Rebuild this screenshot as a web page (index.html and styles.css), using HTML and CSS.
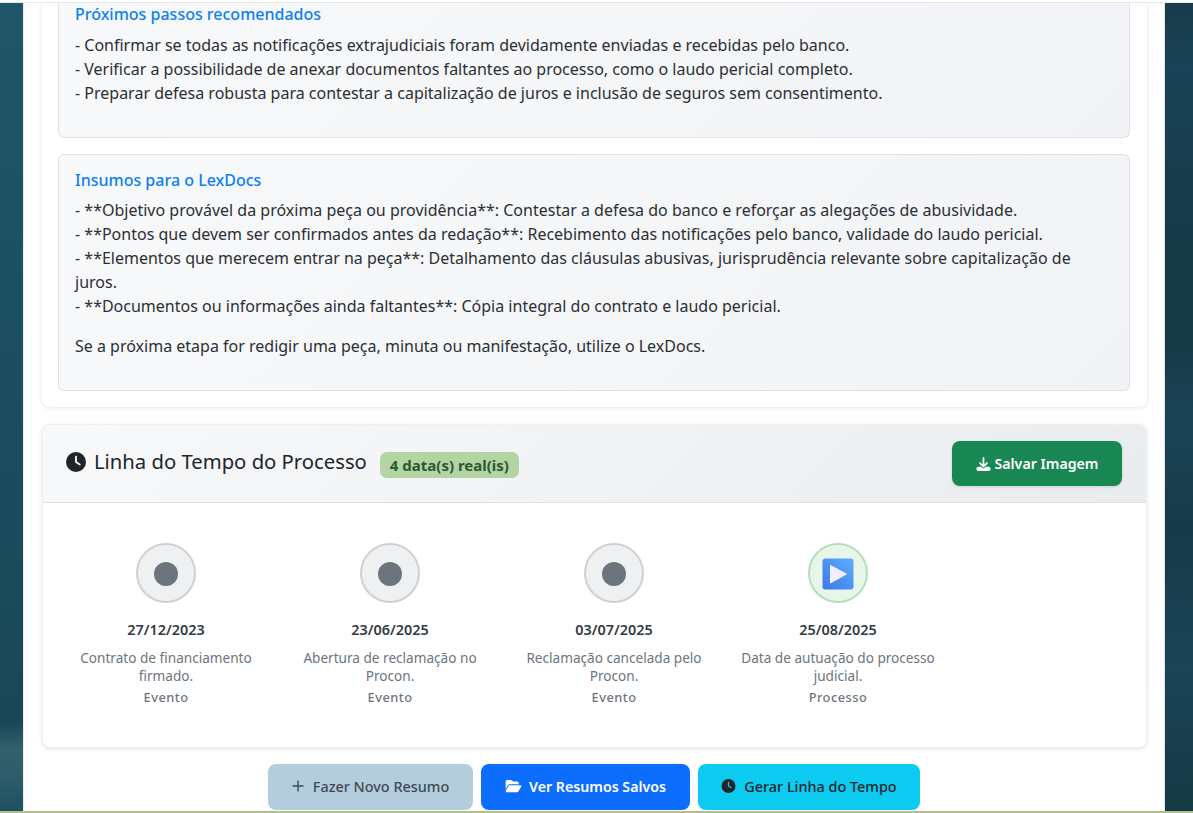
FILE: index.html
```html
<!DOCTYPE html>
<html lang="pt-BR">
<head>
<meta charset="utf-8">
<title>Resumo do Processo</title>
<link rel="stylesheet" href="styles.css">
</head>
<body>
<div class="top-strip"></div>
<main class="page">
  <section class="card summary">
    <div class="panel panel-first">
      <h3 class="panel-title">Próximos passos recomendados</h3>
      <p>- Confirmar se todas as notificações extrajudiciais foram devidamente enviadas e recebidas pelo banco.<br>
      - Verificar a possibilidade de anexar documentos faltantes ao processo, como o laudo pericial completo.<br>
      - Preparar defesa robusta para contestar a capitalização de juros e inclusão de seguros sem consentimento.</p>
    </div>
    <div class="panel panel-second">
      <h3 class="panel-title">Insumos para o LexDocs</h3>
      <p>- **Objetivo provável da próxima peça ou providência**: Contestar a defesa do banco e reforçar as alegações de abusividade.<br>
      - **Pontos que devem ser confirmados antes da redação**: Recebimento das notificações pelo banco, validade do laudo pericial.<br>
      - **Elementos que merecem entrar na peça**: Detalhamento das cláusulas abusivas, jurisprudência relevante sobre capitalização de juros.<br>
      - **Documentos ou informações ainda faltantes**: Cópia integral do contrato e laudo pericial.</p>
      <p>Se a próxima etapa for redigir uma peça, minuta ou manifestação, utilize o LexDocs.</p>
    </div>
  </section>

  <section class="card timeline">
    <header class="tl-header">
      <div class="tl-title">
        <svg class="ico-clock" viewBox="0 0 512 512"><path d="M256 0a256 256 0 1 1 0 512A256 256 0 1 1 256 0zM232 120V256c0 8 4 15.500 10.700 20l96 64c11 7.400 25.900 4.400 33.300-6.700s4.400-25.900-6.700-33.300L280 243.200V120c0-13.300-10.700-24-24-24s-24 10.700-24 24z"/></svg>
        <h2>Linha do Tempo do Processo</h2>
        <span class="badge">4 data(s) real(is)</span>
      </div>
      <button class="btn btn-save"><svg class="ico-sm" viewBox="0 0 512 512"><path d="M288 32c0-17.700-14.300-32-32-32s-32 14.300-32 32V274.700l-73.400-73.400c-12.500-12.500-32.800-12.500-45.300 0s-12.500 32.800 0 45.300l128 128c12.500 12.500 32.800 12.500 45.300 0l128-128c12.500-12.500 12.500-32.800 0-45.300s-32.800-12.500-45.300 0L288 274.700V32zM64 352c-35.300 0-64 28.700-64 64v32c0 35.300 28.700 64 64 64H448c35.300 0 64-28.700 64-64V416c0-35.300-28.700-64-64-64H346.500l-45.300 45.300c-25 25-65.500 25-90.500 0L165.500 352H64z"/></svg>Salvar Imagem</button>
    </header>
    <div class="tl-body">
      <article class="event">
        <div class="marker"><span class="dot"></span></div>
        <div class="date">27/12/2023</div>
        <p class="desc">Contrato de financiamento firmado.</p>
        <div class="kind">Evento</div>
      </article>
      <article class="event">
        <div class="marker"><span class="dot"></span></div>
        <div class="date">23/06/2025</div>
        <p class="desc">Abertura de reclamação no Procon.</p>
        <div class="kind">Evento</div>
      </article>
      <article class="event">
        <div class="marker"><span class="dot"></span></div>
        <div class="date">03/07/2025</div>
        <p class="desc">Reclamação cancelada pelo Procon.</p>
        <div class="kind">Evento</div>
      </article>
      <article class="event">
        <div class="marker marker-process">
          <svg class="play" viewBox="0 0 32 32">
            <defs>
              <linearGradient id="pg" x1="0" y1="1" x2="1" y2="0"><stop offset="0" stop-color="#3f78e8"/><stop offset="1" stop-color="#5aaeff"/></linearGradient>
            </defs>
            <rect x="0.500" y="0.500" width="31" height="31" rx="3" fill="url(#pg)"/>
            <path d="M8.500 7.500v17.500L24.500 16z" fill="#f5eefe" stroke="#f5eefe" stroke-linejoin="round"/>
          </svg>
        </div>
        <div class="date">25/08/2025</div>
        <p class="desc">Data de autuação do processo judicial.</p>
        <div class="kind">Processo</div>
      </article>
    </div>
  </section>

  <nav class="actions">
    <button class="btn btn-new"><svg class="ico-plus" viewBox="0 0 12 12"><path d="M6 .5v11M.5 6h11"/></svg>Fazer Novo Resumo</button>
    <button class="btn btn-saved"><svg class="ico-sm" viewBox="0 0 576 512"><path d="M88.700 223.800L0 375.800V96C0 60.700 28.700 32 64 32H181.500c17 0 33.300 6.700 45.300 18.700l26.500 26.500c12 12 28.300 18.700 45.300 18.700H416c35.300 0 64 28.700 64 64v32H144c-22.800 0-43.800 12.100-55.300 31.800zm27.600 16.100C122.100 230 132.600 224 144 224H544c11.500 0 22 6.100 27.700 16.100s5.700 22.200-.1 32.100l-112 192C453.900 474 443.400 480 432 480H32c-11.500 0-22-6.100-27.700-16.100s-5.700-22.200 .1-32.100l112-192z"/></svg>Ver Resumos Salvos</button>
    <button class="btn btn-gen"><svg class="ico-sm" viewBox="0 0 512 512"><path d="M256 0a256 256 0 1 1 0 512A256 256 0 1 1 256 0zM232 120V256c0 8 4 15.500 10.700 20l96 64c11 7.400 25.900 4.400 33.300-6.700s4.400-25.900-6.700-33.300L280 243.200V120c0-13.300-10.700-24-24-24s-24 10.700-24 24z"/></svg>Gerar Linha do Tempo</button>
  </nav>
</main>
<div class="bottom-strip"></div>
</body>
</html>
```

FILE: styles.css
```css
* { box-sizing: border-box; }

html, body { height: 100%; }

body {
  margin: 0;
  height: 813px;
  overflow: hidden;
  display: flex;
  flex-direction: column;
  font-family: "Noto Sans", sans-serif;
  font-size: 16px;
  line-height: 24px;
  color: #212529;
  background-color: #1a4a5a;
  background-image:
    linear-gradient(180deg, #205669 0%, #1d5063 30%, #1b4c5d 60%, #1a4757 89%, #33606d 92%, #2f5d6b 95%, #1f5060 100%),
    linear-gradient(180deg, #173c4a 0%, #1a4257 8%, #163a46 32%, #173a47 42%, #1b4458 52%, #173b48 65%, #1b4458 82%, #163a45 100%);
  background-size: 50% 100%, 50% 100%;
  background-position: left top, right top;
  background-repeat: no-repeat;
}

.top-strip {
  flex: none;
  height: 3px;
  background: #fff;
  border-bottom: 1px solid #e6e8eb;
}

.bottom-strip {
  flex: none;
  height: 2px;
  background: #b4c08a;
}

.page {
  flex: 1;
  min-height: 0;
  overflow: hidden;
  margin: 0 28px 0 23px;
  padding: 0 17.5px;
  background: #fff;
  border-left: 1px solid #e6eef3;
  border-right: 1px solid #e2e4e8;
}

.card {
  background: #fff;
  border-radius: 8px;
  box-shadow: 0 1px 4px rgba(0, 0, 0, 0.11);
}

.summary {
  padding: 0 16.5px 16px;
  border-radius: 0 0 8px 8px;
}

.panel {
  background: linear-gradient(135deg, #f8f9fa 0%, #f1f3f6 100%);
  border: 1px solid #dfe2e6;
  border-radius: 6px;
  padding: 13px 16px 16px;
}

.panel-first {
  height: 136px;
  margin-top: -1px;
  padding-top: 0;
  border-top: 0;
  border-radius: 0 0 6px 6px;
}

.panel-first .panel-title { margin-bottom: 7px; }

.panel-second {
  height: 237px;
  margin-top: 16px;
}

.panel-title {
  margin: 0 0 6px;
  font-size: 16px;
  line-height: 24px;
  font-weight: 500;
  color: #0d80f2;
}

.panel p { margin: 0 0 16px; color: #2b2f33; }

.timeline {
  height: 324px;
  margin-top: 17px;
  overflow: hidden;
  border: 1px solid #eef0f2;
}

.tl-header {
  height: 78px;
  display: flex;
  align-items: center;
  justify-content: space-between;
  padding: 0 23.500px 0 23.500px;
  background: linear-gradient(135deg, #f8f9fa 0%, #e9ecef 100%);
  border-bottom: 1px solid #dee2e6;
}

.tl-title { display: flex; align-items: center; }

.tl-title h2 {
  margin: 0 13px 6px 8px;
  font-size: 20.25px;
  line-height: 24px;
  font-weight: 400;
  color: #212529;
}

.ico-clock { width: 20px; height: 20px; fill: #212529; margin-bottom: 3px; }

.badge {
  padding: 0 10px;
  height: 26px;
  line-height: 26px;
  margin-top: 2px;
  border-radius: 7px;
  background: #b5d4a5;
  color: #2a5a2c;
  font-size: 15px;
  font-weight: 700;
}

.btn {
  display: inline-flex;
  align-items: center;
  justify-content: center;
  border: 0;
  border-radius: 8px;
  font-family: inherit;
  font-size: 14.4px;
  font-weight: 500;
  height: 46px;
  padding: 0;
}

.btn-save {
  width: 170px;
  height: 45px;
  background: #198754;
  color: #fff;
  font-size: 14.2px;
  font-weight: 600;
  box-shadow: 0 1px 3px rgba(0, 0, 0, 0.12);
}

.ico-sm { width: 15px; height: 14px; fill: currentColor; margin-right: 4px; }

.tl-body {
  display: grid;
  grid-template-columns: repeat(5, 224px);
  padding: 40px 11.500px 0;
}

.event { display: flex; flex-direction: column; align-items: center; text-align: center; padding: 0 12px; }

.marker {
  width: 60px;
  height: 60px;
  display: flex;
  align-items: center;
  justify-content: center;
  border-radius: 50%;
  background: #eff0f2;
  border: 2px solid #ced0d3;
  margin-bottom: 16px;
}

.dot { width: 24px; height: 24px; margin-top: 2px; border-radius: 50%; background: #6c757d; }

.marker-process { background: #e8f5e9; border-color: #b5dfbc; }

.play { width: 32px; height: 32px; margin-top: 2px; }

.date {
  font-size: 14.4px;
  line-height: 21px;
  font-weight: 600;
  color: #343a40;
  margin-bottom: 9px;
}

.desc {
  margin: 0;
  width: 200px;
  font-size: 13.6px;
  line-height: 18px;
  color: #6c757d;
}

.kind {
  margin-top: 3px;
  font-size: 12.8px;
  line-height: 18px;
  font-weight: 500;
  letter-spacing: 0.5px;
  color: #6c757d;
}

.actions {
  display: flex;
  justify-content: center;
  gap: 8px;
  margin-top: 16px;
}

.actions .btn { padding-bottom: 2px; }

.btn-new { width: 205px; background: #b4cddc; color: #3b4a55; }
.btn-saved { width: 209px; background: #0d6efd; color: #fff; font-size: 14.2px; font-weight: 600; }
.btn-gen { width: 222px; background: #0dcaf0; color: #212529; }

.btn-saved .ico-sm { width: 17px; margin-right: 7px; }
.btn-gen .ico-sm { width: 15px; margin-right: 8px; }

.ico-plus { width: 12px; height: 12px; margin-right: 9px; fill: none; stroke: #3b4a55; stroke-width: 1.4; }
```
